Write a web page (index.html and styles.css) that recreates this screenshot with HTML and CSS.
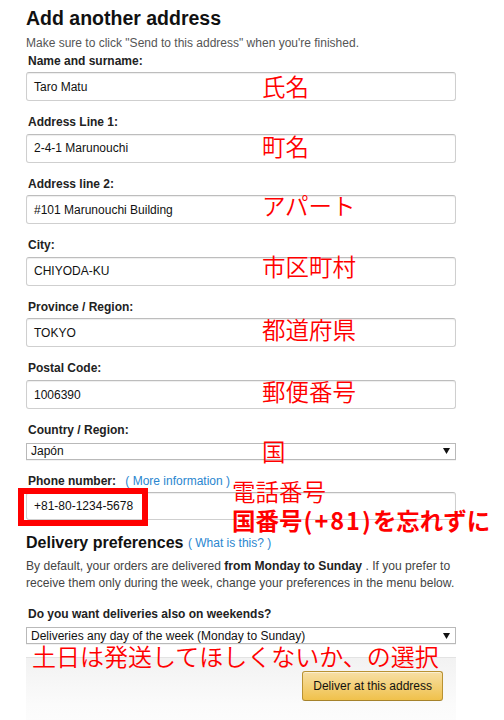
FILE: index.html
```html
<!DOCTYPE html>
<html lang="en">
<head>
<meta charset="utf-8">
<title>Add another address</title>
<link rel="stylesheet" href="styles.css">
</head>
<body>
<div class="page">
  <div class="form">
    <h1 class="title">Add another address</h1>
    <p class="subtitle">Make sure to click "Send to this address" when you're finished.</p>

    <div class="fields">
      <div class="field">
        <label class="label">Name and surname:</label>
        <div class="input">Taro Matu</div>
      </div>
      <div class="field">
        <label class="label">Address Line 1:</label>
        <div class="input">2-4-1 Marunouchi</div>
      </div>
      <div class="field">
        <label class="label">Address line 2:</label>
        <div class="input">#101 Marunouchi Building</div>
      </div>
      <div class="field">
        <label class="label">City:</label>
        <div class="input">CHIYODA-KU</div>
      </div>
      <div class="field">
        <label class="label">Province / Region:</label>
        <div class="input">TOKYO</div>
      </div>
      <div class="field">
        <label class="label">Postal Code:</label>
        <div class="input">1006390</div>
      </div>
      <div class="field">
        <label class="label label-select">Country / Region:</label>
        <div class="select"><span>Japón</span><svg class="arrow" width="7" height="6" viewBox="0 0 7 6"><path d="M0 0H7L3.5 6Z" fill="#111"/></svg></div>
      </div>
      <div class="field field-last">
        <label class="label">Phone number: <a class="link link-label">( More information )</a></label>
        <div class="input input-phone">+81-80-1234-5678</div>
      </div>
    </div>

    <h2 class="section-title">Delivery preferences <a class="link link-title">( What is this? )</a></h2>
    <p class="desc">By default, your orders are delivered <b>from Monday to Sunday</b> . If you prefer to<br>receive them only during the week, change your preferences in the menu below.</p>

    <label class="label label-weekend">Do you want deliveries also on weekends?</label>
    <div class="select"><span>Deliveries any day of the week (Monday to Sunday)</span><svg class="arrow" width="7" height="6" viewBox="0 0 7 6"><path d="M0 0H7L3.5 6Z" fill="#111"/></svg></div>

    <div class="actions">
      <button class="button">Deliver at this address</button>
    </div>
  </div>

  <div class="note n-name">氏名</div>
  <div class="note n-line1">町名</div>
  <div class="note n-line2">アパート</div>
  <div class="note n-city">市区町村</div>
  <div class="note n-pref">都道府県</div>
  <div class="note n-postal">郵便番号</div>
  <div class="note n-country">国</div>
  <div class="note n-phone">電話番号</div>
  <div class="note note-bold n-code">国番号<span class="code">(+81)</span>を忘れずに</div>
  <div class="note n-weekend">土日は発送してほしくないか、の選択</div>
  <div class="highlight"></div>
</div>
</body>
</html>
```

FILE: styles.css
```css
html, body {
  margin: 0;
  padding: 0;
  background: #fff;
}

body {
  font-family: "Liberation Sans", Arial, sans-serif;
  color: #111;
}

.page {
  position: relative;
  width: 504px;
  height: 720px;
  overflow: hidden;
  padding-left: 26px;
  box-sizing: border-box;
}

.form {
  width: 430px;
}

.title {
  margin: 5.5px 0 0;
  font-size: 19.5px;
  line-height: 24px;
  font-weight: 700;
  color: #111;
}

.subtitle {
  margin: 6px 0 3px;
  font-size: 12px;
  line-height: 15px;
  color: #555;
}

.field {
  margin-bottom: 14px;
}

.field-last {
  margin-bottom: 0;
}

.label {
  display: block;
  margin: 0 0 3.6px 2px;
  font-size: 12px;
  line-height: 15px;
  font-weight: 700;
  color: #222;
}

.label-select {
  margin-bottom: 4.6px;
}

.input {
  box-sizing: border-box;
  height: 29px;
  padding: 0 7px;
  display: flex;
  align-items: center;
  font-size: 12px;
  color: #111;
  background: #fff;
  border: 1px solid #cfcfcf;
  border-top-color: #bdbdbd;
  border-radius: 3px;
  box-shadow: inset 0 1px 1px rgba(0, 0, 0, 0.07);
}

.input-phone {
  height: 28px;
}

.select {
  box-sizing: border-box;
  height: 17px;
  padding: 0 5px 0 4px;
  display: flex;
  align-items: center;
  justify-content: space-between;
  font-size: 12px;
  color: #111;
  background: #fff;
  border: 1px solid #b9b9b9;
  box-shadow: 0 1px 0 rgba(0, 0, 0, 0.05);
}

.arrow {
  display: block;
}

.link {
  color: #2a86cf;
  font-weight: 400;
  text-decoration: none;
}

.link-label {
  margin-left: 6px;
}

.section-title {
  margin: 12.5px 0 0;
  font-size: 16px;
  line-height: 20px;
  font-weight: 700;
  color: #111;
}

.link-title {
  font-size: 12px;
  position: relative;
  top: -1px;
}

.desc {
  margin: 4px 0 0;
  font-size: 12.1px;
  line-height: 17.6px;
  color: #444;
  white-space: nowrap;
}

.desc b {
  color: #222;
}

.label-weekend {
  margin-top: 14.5px;
  margin-bottom: 5px;
}

.actions {
  margin-top: 13px;
  height: 80px;
  padding: 13px 13px 0;
  display: flex;
  justify-content: flex-end;
  align-items: flex-start;
  border-top: 1px solid #e3e3e3;
  background: linear-gradient(to bottom, #f2f2f2, #fbfbfb 50%, #fff);
}

.button {
  box-sizing: border-box;
  height: 30px;
  padding: 0 10px;
  font-family: "Liberation Sans", Arial, sans-serif;
  font-size: 12px;
  color: #111;
  background: linear-gradient(to bottom, #f7dfa5, #f0c14b);
  border: 1px solid #b99232;
  border-bottom-color: #a5822b;
  border-radius: 3px;
  box-shadow: inset 0 1px 0 rgba(255, 255, 255, 0.5);
}

.note {
  position: absolute;
  color: #ff0000;
  font-family: "Noto Sans CJK JP DemiLight", "Noto Sans CJK JP Light", "Noto Sans CJK JP", sans-serif;
  font-size: 23.5px;
  font-weight: 300;
  line-height: 1;
  white-space: nowrap;
}

.note-bold {
  font-family: "Noto Sans CJK JP", sans-serif;
  font-weight: 700;
}

.code {
  letter-spacing: 2px;
  padding-left: 1px;
}

.n-name { left: 262px; top: 75px; }
.n-line1 { left: 262px; top: 134.5px; }
.n-line2 { left: 262px; top: 194px; }
.n-city { left: 262px; top: 255px; }
.n-pref { left: 262px; top: 318px; }
.n-postal { left: 262px; top: 380px; }
.n-country { left: 262px; top: 440px; }
.n-phone { left: 232px; top: 480px; }
.n-code { left: 232px; top: 509px; }
.n-weekend { left: 32px; top: 644px; font-size: 24px; }

.highlight {
  position: absolute;
  left: 18px;
  top: 488px;
  width: 130px;
  height: 38px;
  box-sizing: border-box;
  border: 6px solid #ff0000;
}
```
